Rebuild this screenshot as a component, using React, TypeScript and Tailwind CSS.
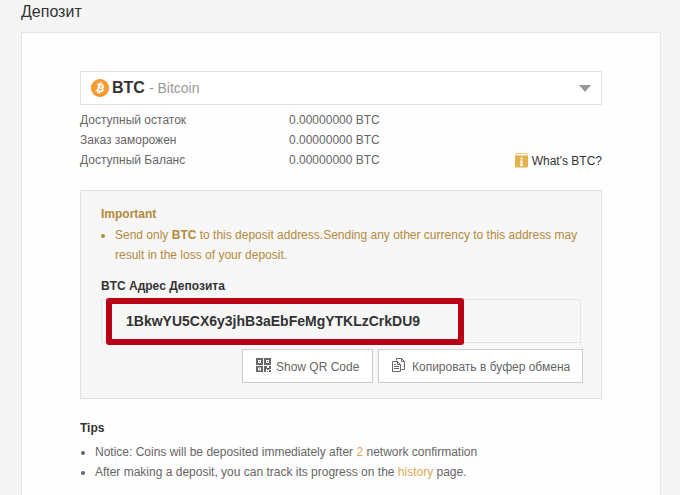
const balances = [
  { label: 'Доступный остаток', value: '0.00000000 BTC' },
  { label: 'Заказ заморожен', value: '0.00000000 BTC' },
  { label: 'Доступный Баланс', value: '0.00000000 BTC' },
];

function BitcoinIcon() {
  return (
    <svg width="18" height="18" viewBox="0 0 32 32" className="shrink-0">
      <circle cx="16" cy="16" r="16" fill="#F7931A" />
      <circle cx="16" cy="15" r="14" fill="#F9A852" opacity="0.4" />
      <path
        fill="#FFF"
        stroke="#FFF"
        strokeWidth="0.4"
        d="M23.2 14c.3-2.1-1.3-3.2-3.500-4l.7-2.800-1.700-.4-.7 2.700-1.400-.3.7-2.700-1.700-.4-.7 2.800-3.500-.9-.5 1.800s1.300.3 1.200.3c.7.200.8.6.8 1l-2 7.900c-.1.200-.3.500-.8.400l-1.200-.3-.9 2 3.400.8-.7 2.900 1.700.4.7-2.800 1.400.4-.7 2.800 1.700.4.7-2.800c2.900.5 5.100.3 6-2.300.8-2.100 0-3.300-1.500-4.100 1.100-.3 1.900-1 2.500-2.800zm-3.900 5.400c-.5 2.100-4.100 1-5.200.7l.9-3.800c1.200.3 4.900.9 4.300 3.100zm.6-5.500c-.5 1.900-3.400.9-4.400.7l.9-3.400c1 .2 4.100.7 3.500 2.700z"
      />
    </svg>
  );
}

function InfoIcon() {
  return (
    <svg width="13" height="15" viewBox="0 0 13 15" className="mb-0.5 shrink-0">
      <path d="M1 .5h11v3H1z" fill="#FFF" stroke="#EBC680" />
      <path d="M0 2.500h13v11a1 1 0 0 1-1 1H1a1 1 0 0 1-1-1z" fill="#E6B04C" />
      <path d="M5.500 4.500h2v2h-2zM5 7.500h2.500V12h.5v1H5v-1h.5V8.500H5z" fill="#FFF" />
    </svg>
  );
}

function QrIcon() {
  return (
    <svg width="15" height="15" viewBox="0 0 15 15" className="mb-0.5 shrink-0" fill="#666">
      <path fillRule="evenodd" d="M0 0h7v7H0zM2 2v3h3V2zM8 0h7v7H8zM10 2v3h3V2zM0 8h7v6H0zM2 9.500v3h3v-3z" />
      <path d="M3 3h1v1H3zM11 3h1v1h-1zM3 10.500h1v1H3z" />
      <path d="M8 8h3v2h2V8h2v3h-2v1h-2v-1h-1v3H8zM11 13h1v1h-1zM13 12h2v2h-2z" />
    </svg>
  );
}

function CopyIcon() {
  return (
    <svg width="13" height="15" viewBox="0 0 13 15" className="mb-0.5 shrink-0" fill="none" stroke="#666">
      <path d="M4.500 2.500v-2h5l3 3v8h-3M9.500.5v3h3" />
      <path d="M.5 3.500h5l3 3v7h-8zM5.500 3.500v3h3M2 6.500h2M2 8.500h5M2 10.500h5" />
    </svg>
  );
}

export default function App() {
  return (
    <div className="h-[495px] w-[680px] overflow-hidden bg-[#f5f5f5] pl-[21px] font-['Liberation_Sans',Arial,sans-serif] text-xs leading-5 text-[#666]">
      <h1 className="h-8 text-base leading-6 text-[#333]">Депозит</h1>

      <main className="h-[480px] w-[640px] border border-[#e5e5e5] bg-[#fefefe] px-[58px] pt-[38px]">
        {/* Coin selector */}
        <div className="flex h-[34px] items-center border border-[#e1e1e1] bg-white pr-2.5 pl-2.5">
          <BitcoinIcon />
          <span className="ml-[3px] text-base font-bold text-[#333]">BTC</span>
          <span className="ml-1 text-sm text-[#999]">- Bitcoin</span>
          <svg width="12" height="7" viewBox="0 0 12 7" className="ml-auto" fill="#999">
            <path d="M0 0h12L6 7z" />
          </svg>
        </div>

        {/* Balances */}
        <div className="mt-[5px] flex items-end justify-between">
          <dl>
            {balances.map((row) => (
              <div key={row.label} className="flex">
                <dt className="w-[209px]">{row.label}</dt>
                <dd>{row.value}</dd>
              </div>
            ))}
          </dl>
          <a className="flex items-center gap-1 pt-px -mb-px text-[#333]">
            <InfoIcon />
            What's BTC?
          </a>
        </div>

        {/* Deposit address */}
        <section className="mt-5 h-[209px] border border-[#e1e1e1] bg-[#f7f7f7] px-5 pt-[13px]">
          <div className="text-[#b4893c]">
            <h2 className="font-bold">Important</h2>
            <ul className="mt-px list-disc pl-3.5">
              <li>
                Send only <b>BTC</b> to this deposit address.Sending any other currency to this address may result in the loss of your deposit.
              </li>
            </ul>
          </div>
          <h3 className="mt-[11px] font-bold text-[#333]">BTC Адрес Депозита</h3>
          <div className="relative mt-[3px] flex h-11 items-center border border-[#e5e5e5] pl-6">
            <span className="text-sm font-bold text-[#333]">1BkwYU5CX6y3jhB3aEbFeMgYTKLzCrkDU9</span>
            <div className="absolute -top-0.5 left-1 h-[47px] w-[358px] rounded-[3px] border-[6px] border-[#b90016]" />
          </div>
          <div className="-mr-0.5 mt-1.5 flex justify-end gap-[5px]">
            <button className="flex h-[34px] w-[131px] items-center border border-[#ccc] bg-white pl-[13px]">
              <QrIcon />
              <span className="ml-[5px] pt-0.5">Show QR Code</span>
            </button>
            <button className="flex h-[34px] w-[205px] items-center border border-[#ccc] bg-white pl-[13px]">
              <CopyIcon />
              <span className="ml-[7px] whitespace-nowrap pt-0.5">Копировать в буфер обмена</span>
            </button>
          </div>
        </section>

        {/* Tips */}
        <section className="mt-[19px]">
          <h2 className="font-bold text-[#333]">Tips</h2>
          <ul className="mt-1 list-disc pl-[15px]">
            <li>
              Notice: Coins will be deposited immediately after <span className="text-[#e0a956]">2</span> network confirmation
            </li>
            <li>
              After making a deposit, you can track its progress on the <a className="text-[#e0a956]">history</a> page.
            </li>
          </ul>
        </section>
      </main>
    </div>
  );
}
